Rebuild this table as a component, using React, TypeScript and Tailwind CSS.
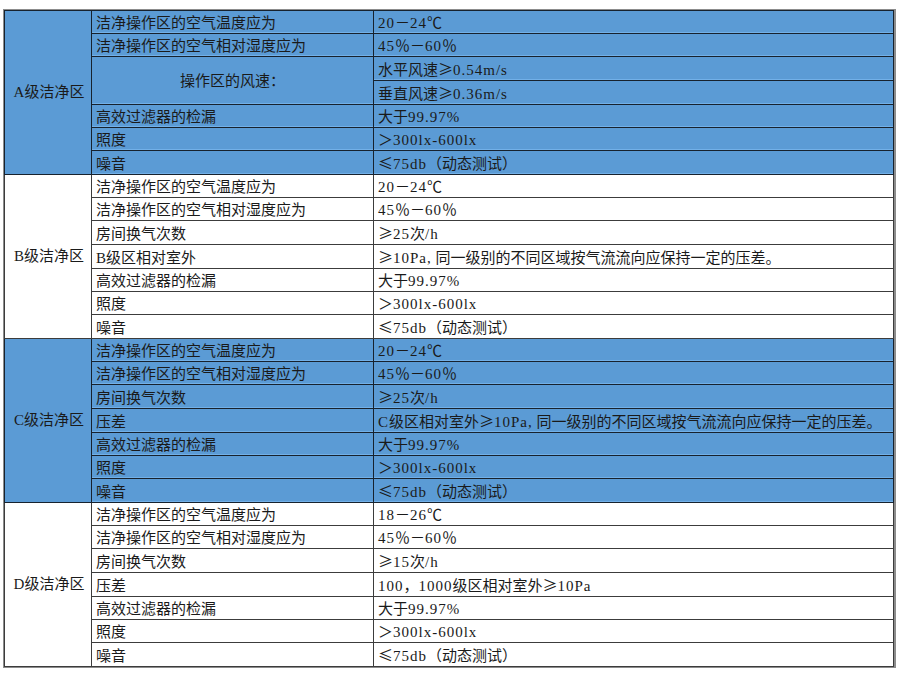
import React from 'react'

type Row = { label: string; value: string }

interface Section {
  name: string
  blue: boolean
  rows: Row[]
}

const temp = '洁净操作区的空气温度应为'
const humid = '洁净操作区的空气相对湿度应为'

const sections: Section[] = [
  {
    name: 'A级洁净区',
    blue: true,
    rows: [
      { label: temp, value: '20－24℃' },
      { label: humid, value: '45％－60％' },
      { label: '操作区的风速：', value: '水平风速≥0.54m/s' },
      { label: '', value: '垂直风速≥0.36m/s' },
      { label: '高效过滤器的检漏', value: '大于99.97%' },
      { label: '照度', value: '＞300lx-600lx' },
      { label: '噪音', value: '≤75db（动态测试）' }
    ]
  },
  {
    name: 'B级洁净区',
    blue: false,
    rows: [
      { label: temp, value: '20－24℃' },
      { label: humid, value: '45％－60％' },
      { label: '房间换气次数', value: '≥25次/h' },
      { label: 'B级区相对室外', value: '≥10Pa, 同一级别的不同区域按气流流向应保持一定的压差。' },
      { label: '高效过滤器的检漏', value: '大于99.97%' },
      { label: '照度', value: '＞300lx-600lx' },
      { label: '噪音', value: '≤75db（动态测试）' }
    ]
  },
  {
    name: 'C级洁净区',
    blue: true,
    rows: [
      { label: temp, value: '20－24℃' },
      { label: humid, value: '45％－60％' },
      { label: '房间换气次数', value: '≥25次/h' },
      { label: '压差', value: 'C级区相对室外≥10Pa, 同一级别的不同区域按气流流向应保持一定的压差。' },
      { label: '高效过滤器的检漏', value: '大于99.97%' },
      { label: '照度', value: '＞300lx-600lx' },
      { label: '噪音', value: '≤75db（动态测试）' }
    ]
  },
  {
    name: 'D级洁净区',
    blue: false,
    rows: [
      { label: temp, value: '18－26℃' },
      { label: humid, value: '45％－60％' },
      { label: '房间换气次数', value: '≥15次/h' },
      { label: '压差', value: '100，1000级区相对室外≥10Pa' },
      { label: '高效过滤器的检漏', value: '大于99.97%' },
      { label: '照度', value: '＞300lx-600lx' },
      { label: '噪音', value: '≤75db（动态测试）' }
    ]
  }
]

// ≥ / ≤ are full-width in the original, latin runs are a touch wider (SimSun-ish)
function Value({ text }: { text: string }) {
  const parts = text.split(/([≥≤]|[0-9A-Za-z.,%/\-]+)/).filter(Boolean)
  return (
    <>
      {parts.map((p, i) => {
        if (p === '≥' || p === '≤')
          return (
            <span key={i} className="inline-block w-[15px] font-['Noto_Sans_CJK_SC',sans-serif]">
              {p}
            </span>
          )
        if (/^[0-9A-Za-z.,%/\-]+$/.test(p))
          return (
            <span key={i} className="tracking-[1px]">
              {p}
            </span>
          )
        return <React.Fragment key={i}>{p}</React.Fragment>
      })}
    </>
  )
}

export default function App() {
  return (
    <div className="min-h-[675px] w-[900px] bg-white pl-[3px] pt-[9px] font-['Liberation_Serif','Noto_Sans_CJK_SC',sans-serif] text-[15px] text-[#1a1a1a]">
      <div className="w-[893px] border border-r-2 border-[#8c8c8c]">
        <table className="h-[657px] w-full table-fixed border-collapse">
          <colgroup>
            <col className="w-[87px]" />
            <col className="w-[282px]" />
            <col />
          </colgroup>
          <tbody>
            {sections.map((s) => {
              const line = s.blue ? 'border-[#17222e]' : 'border-[#3c3c3c]'
              const cell = s.blue
                ? `border ${line} bg-[#5b9bd5] shadow-[inset_0_-1px_0_#72b0e8]`
                : `border ${line} bg-white`
              return s.rows.map((r, i) => (
                <tr key={`${s.name}-${i}`} className="h-[23px]">
                  {i === 0 && (
                    <td
                      rowSpan={s.rows.length}
                      className={`border ${line} ${s.blue ? 'bg-[#5b9bd5]' : 'bg-white'} pl-[2px] text-center align-middle`}
                    >
                      {s.name}
                    </td>
                  )}
                  {s.name === 'A级洁净区' && i === 2 && (
                    <td rowSpan={2} className={`${cell} pt-[2px] text-center align-middle`}>
                      {r.label}
                    </td>
                  )}
                  {!(s.name === 'A级洁净区' && (i === 2 || i === 3)) && (
                    <td className={`${cell} whitespace-nowrap pl-[4px] pt-[2px] align-middle leading-[20px]`}>
                      {r.label}
                    </td>
                  )}
                  <td className={`${cell} whitespace-nowrap pl-[4px] pt-[2px] align-middle leading-[20px]`}>
                    <Value text={r.value} />
                  </td>
                </tr>
              ))
            })}
          </tbody>
        </table>
      </div>
    </div>
  )
}
